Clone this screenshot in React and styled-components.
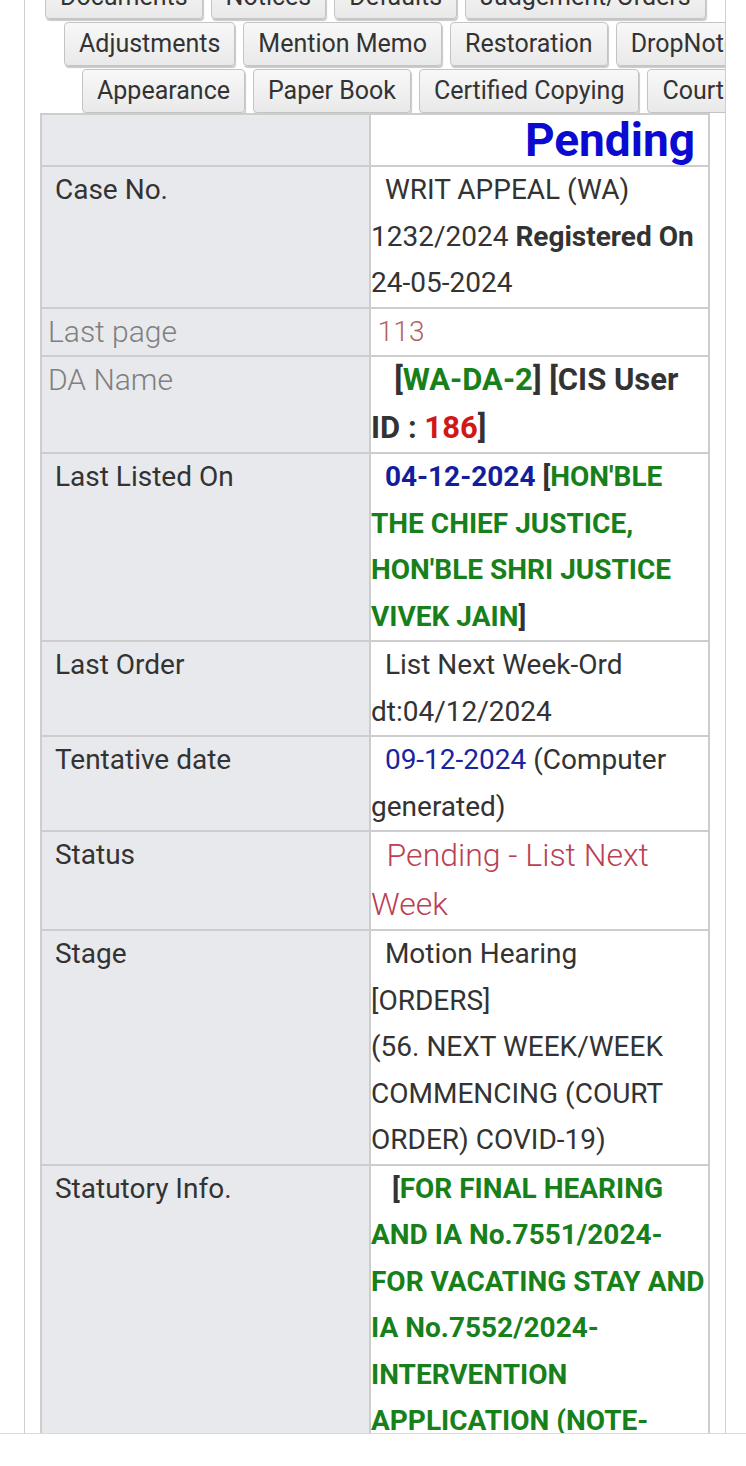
import React from "react";
import styled, { createGlobalStyle } from "styled-components";

const GlobalStyle = createGlobalStyle`
  html, body {
    margin: 0;
    padding: 0;
    background: #ffffff;
  }
  body {
    font-family: Roboto, "Noto Sans", "Liberation Sans", sans-serif;
    color: #333333;
  }
`;

const Viewport = styled.div`
  height: 1433px;
  overflow: hidden;
  border-bottom: 1px solid #d9d9d9;
  background: #ffffff;
`;

const Frame = styled.div`
  margin-left: 24px;
  width: 700px;
  min-height: 1500px;
  border-left: 1px solid #cfcfcf;
  border-right: 1px solid #cfcfcf;
  background: #ffffff;
`;

const Tabs = styled.div`
  margin-top: -25px;
  display: flex;
  flex-direction: column;
  gap: 3px;
  overflow: hidden;
`;

const TabRow = styled.div`
  display: flex;
  gap: 8px;
  padding-left: ${(p) => p.$indent}px;
  white-space: nowrap;
`;

const Tab = styled.div`
  flex: none;
  height: 42px;
  line-height: 42px;
  padding: 0 14px;
  font-size: 25px;
  color: #333333;
  background: linear-gradient(#f8f8f8, #e9e9e9);
  border: 1px solid #c4c4c4;
  border-radius: 4px;
  box-shadow: 1px 2px 1px rgba(0, 0, 0, 0.22);
`;

const Table = styled.table`
  margin: 0 0 0 15px;
  width: 670px;
  border-collapse: collapse;
  table-layout: fixed;
  border: 2px solid #cdcdcd;
`;

const LabelCell = styled.td`
  width: 321px;
  vertical-align: top;
  background: #e8e9ec;
  border: 2px solid #cdcdcd;
  padding: 0 0 0 6px;
  font-size: ${(p) => (p.$muted ? 30 : 28)}px;
  line-height: 46.5px;
  font-weight: ${(p) => (p.$muted ? 300 : 400)};
  color: ${(p) => (p.$muted ? "#7f7f7f" : "#333333")};
  white-space: pre-wrap;
`;

const ValueCell = styled.td`
  vertical-align: top;
  background: #ffffff;
  border: 2px solid #cdcdcd;
  padding: 0 0 ${(p) => p.$tail || 0}px 0;
  font-size: 28px;
  line-height: 46.5px;
  color: #333333;
  white-space: pre-wrap;
  word-wrap: break-word;
`;

const HeadCell = styled(ValueCell)`
  height: 50px;
  text-align: right;
  padding-right: 13px;
  font-size: 46px;
  line-height: 50px;
  font-weight: 700;
  color: #0a0ad0;
`;

const Bold = styled.b`
  font-weight: 700;
  font-size: ${(p) => (p.$size ? `${p.$size}px` : "inherit")};
  color: ${(p) => p.$color || "#333333"};
`;

const Blue = styled.span`
  color: #1a249e;
`;

const Thin = styled.span`
  font-weight: 300;
  font-size: ${(p) => p.$size || 28}px;
  color: ${(p) => p.$color};
`;

const GREEN = "#17801a";

const tabRows = [
  { indent: 20, items: ["Documents", "Notices", "Defaults", "Judgement/Orders"] },
  { indent: 39, items: ["Adjustments", "Mention Memo", "Restoration", "DropNote"] },
  { indent: 57, items: ["Appearance", "Paper Book", "Certified Copying", "Court Fee"] },
];

const rows = [
  {
    label: " Case No.",
    value: (
      <>
        {"  WRIT APPEAL (WA) 1232/2024 "}
        <Bold>Registered On</Bold>
        {" 24-05-2024"}
      </>
    ),
  },
  {
    label: "Last page",
    muted: true,
    value: <Thin $color="#b2615f">{" 113"}</Thin>,
  },
  {
    label: "DA Name",
    muted: true,
    value: (
      <Bold $size={31}>
        {"   ["}
        <Bold $color={GREEN}>WA-DA-2</Bold>
        {"] [CIS User ID : "}
        <Bold $color="#d01818">186</Bold>
        {"]"}
      </Bold>
    ),
  },
  {
    label: " Last Listed On",
    value: (
      <>
        {"  "}
        <Bold $color="#141d9c">04-12-2024</Bold>{" "}
        <Bold>
          [<Bold $color={GREEN}>HON'BLE THE CHIEF JUSTICE, HON'BLE SHRI JUSTICE VIVEK JAIN</Bold>]
        </Bold>
      </>
    ),
  },
  {
    label: " Last Order",
    value: "  List Next Week-Ord dt:04/12/2024",
  },
  {
    label: " Tentative date",
    value: (
      <>
        {"  "}
        <Blue>09-12-2024</Blue>
        {" (Computer generated)"}
      </>
    ),
  },
  {
    label: " Status",
    value: (
      <Thin $size={32} $color="#bb3f55">
        {"  Pending - List Next Week"}
      </Thin>
    ),
  },
  {
    label: " Stage",
    value: (
      <>
        {"  Motion Hearing"}
        <br />
        {"[ORDERS]"}
        <br />
        {"(56. NEXT WEEK/WEEK COMMENCING (COURT ORDER) COVID-19)"}
      </>
    ),
  },
  {
    label: " Statutory Info.",
    tail: 80,
    value: (
      <Bold>
        {"   ["}
        <Bold $color={GREEN}>
          FOR FINAL HEARING AND IA No.7551/2024-FOR VACATING STAY AND IA No.7552/2024-INTERVENTION APPLICATION (NOTE-
        </Bold>
      </Bold>
    ),
  },
];

export default function App() {
  return (
    <>
      <GlobalStyle />
      <Viewport>
        <Frame>
          <Tabs>
            {tabRows.map((r, i) => (
              <TabRow key={i} $indent={r.indent}>
                {r.items.map((t) => (
                  <Tab key={t}>{t}</Tab>
                ))}
              </TabRow>
            ))}
          </Tabs>
          <Table>
            <tbody>
              <tr>
                <LabelCell />
                <HeadCell>Pending</HeadCell>
              </tr>
              {rows.map((r) => (
                <tr key={r.label}>
                  <LabelCell $muted={r.muted}>{r.label}</LabelCell>
                  <ValueCell $tail={r.tail}>{r.value}</ValueCell>
                </tr>
              ))}
            </tbody>
          </Table>
        </Frame>
      </Viewport>
    </>
  );
}
